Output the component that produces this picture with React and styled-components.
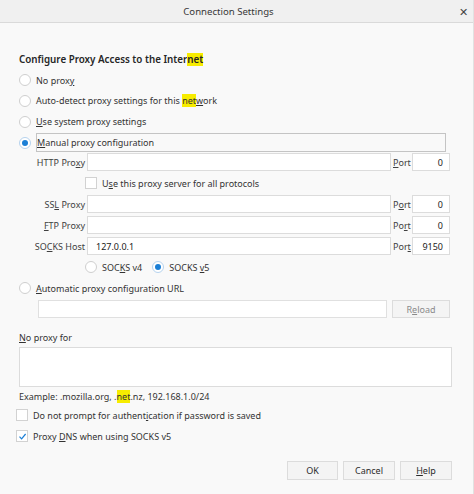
import React from "react";
import styled, { createGlobalStyle } from "styled-components";

const GlobalStyle = createGlobalStyle`
  html, body { margin: 0; padding: 0; background: #f9f9f9; }
  body { font-family: "Noto Sans", "Open Sans", sans-serif; font-size: 9px; color: #333; }
  * { box-sizing: border-box; }
`;

const Window = styled.div`
  width: 474px;
  height: 494px;
  background: #f9f9f9;
  display: flex;
  flex-direction: column;
  border-right: 1px solid #e2e2e2;
  overflow: hidden;
`;

const TitleBar = styled.div`
  height: 23px;
  flex: none;
  background: #f0f0f0;
  border-bottom: 1px solid #dadada;
  display: grid;
  grid-template-columns: 1fr auto 1fr;
  align-items: center;
`;

const Title = styled.div`
  grid-column: 2;
  font-size: 9.6px;
  color: #383838;
  padding-right: 16px;
`;

const Close = styled.div`
  grid-column: 3;
  justify-self: end;
  margin-right: 5px;
  font-size: 11px;
  color: #444;
`;

const Content = styled.div`
  display: flex;
  flex-direction: column;
  padding: 29px 21px 0 19px;
`;

const Heading = styled.div`
  height: 16px;
  line-height: 16px;
  font-size: 9.8px;
  font-weight: 600;
  color: #262626;
`;

const Mark = styled.span`
  background: #f7ec00;
`;

const Key = styled.span`
  text-decoration: underline;
  text-underline-offset: 1px;
`;

const OptionRow = styled.label`
  display: flex;
  align-items: center;
  gap: 5px;
  height: ${(p) => p.$h || 20}px;
  margin-top: ${(p) => p.$mt || 0}px;
  margin-left: ${(p) => p.$ml || 0}px;
`;

const RadioDot = styled.span`
  flex: none;
  width: 12px;
  height: 12px;
  border-radius: 50%;
  background: #fff;
  border: 1px solid ${(p) => (p.$on ? "#b6d3ee" : "#cfcfcf")};
  display: flex;
  align-items: center;
  justify-content: center;
  &::after {
    content: "";
    width: 6px;
    height: 6px;
    border-radius: 50%;
    background: ${(p) => (p.$on ? "#1b7fd6" : "transparent")};
  }
`;

const FocusText = styled.span`
  flex: 1;
  height: 19px;
  line-height: 17px;
  border: 1px solid #c4c4c4;
  margin-right: 6px;
`;

const ProxyGrid = styled.div`
  display: grid;
  grid-template-columns: 49px 304px 17px 38px;
  grid-template-rows: 18px 18px 18px 18px 18px 18px;
  column-gap: 2px;
  row-gap: 3px;
  margin-left: 17px;
  margin-top: 1px;
  align-items: center;
`;

const FieldLabel = styled.span`
  justify-self: end;
  white-space: nowrap;
  color: #404040;
`;

const PortLabel = styled.span`
  color: #404040;
`;

const TextField = styled.div`
  height: 18px;
  background: #fff;
  border: 1px solid #dcdcdc;
  display: flex;
  align-items: center;
  justify-content: ${(p) => (p.$right ? "flex-end" : "flex-start")};
  padding: 0 ${(p) => (p.$right ? 6 : 8)}px;
  color: #222;
`;

const SpanRow = styled.div`
  grid-column: 2 / 5;
  display: flex;
  align-items: center;
  gap: 5px;
  margin-left: -2px;
`;

const VersionRow = styled.div`
  grid-column: 2 / 5;
  display: flex;
  align-items: center;
  margin-left: -2px;
  gap: 10px;
`;

const Box = styled.span`
  flex: none;
  width: 12px;
  height: 12px;
  background: #fff;
  border: 1px solid #d2d2d2;
  display: flex;
  align-items: center;
  justify-content: center;
`;

const UrlRow = styled.div`
  display: flex;
  gap: 5px;
  height: 18px;
  margin-top: 3px;
  margin-left: 19px;
  margin-right: 2px;
`;

const UrlField = styled.div`
  flex: 1;
  background: #fff;
  border: 1px solid #e0e0e0;
`;

const Button = styled.div`
  width: ${(p) => p.$w || 52}px;
  height: ${(p) => p.$h || 19}px;
  border: 1px solid #dcdcdc;
  background: #f4f4f4;
  display: flex;
  align-items: center;
  justify-content: center;
  color: ${(p) => (p.$disabled ? "#8a8a8a" : "#2b2b2b")};
`;

const SectionLabel = styled.div`
  height: 16px;
  line-height: 16px;
  margin-top: 12px;
`;

const TextArea = styled.div`
  height: 40px;
  margin-top: 1px;
  background: #fff;
  border: 1px solid #dcdcdc;
`;

const Hint = styled.div`
  height: 16px;
  line-height: 16px;
  margin-top: 2px;
`;

const ButtonBar = styled.div`
  display: flex;
  justify-content: flex-end;
  gap: 5px;
  margin-top: 16px;
`;

const Check = ({ on }) => (
  <Box>
    {on && (
      <svg width="9" height="9" viewBox="0 0 9 9">
        <path d="M1.5 4.6 L3.6 6.8 L7.6 2" fill="none" stroke="#1b7fd6" strokeWidth="1.2" />
      </svg>
    )}
  </Box>
);

export default function App() {
  return (
    <>
      <GlobalStyle />
      <Window>
        <TitleBar>
          <Title>Connection Settings</Title>
          <Close>✕</Close>
        </TitleBar>
        <Content>
          <Heading>
            Configure Proxy Access to the Inter<Mark>net</Mark>
          </Heading>
          <OptionRow $mt={2}>
            <RadioDot />
            <span>No prox<Key>y</Key></span>
          </OptionRow>
          <OptionRow $h={21}>
            <RadioDot />
            <span>
              Auto-detect proxy settings for this <Mark>net</Mark><Key>w</Key>ork
            </span>
          </OptionRow>
          <OptionRow $h={21}>
            <RadioDot />
            <span><Key>U</Key>se system proxy settings</span>
          </OptionRow>
          <OptionRow $h={19} $mt={1}>
            <RadioDot $on />
            <FocusText><Key>M</Key>anual proxy configuration</FocusText>
          </OptionRow>

          <ProxyGrid>
            <FieldLabel>HTTP Pro<Key>x</Key>y</FieldLabel>
            <TextField />
            <PortLabel><Key>P</Key>ort</PortLabel>
            <TextField $right>0</TextField>

            <SpanRow>
              <Check />
              <span>U<Key>s</Key>e this proxy server for all protocols</span>
            </SpanRow>

            <FieldLabel>SS<Key>L</Key> Proxy</FieldLabel>
            <TextField />
            <PortLabel>P<Key>o</Key>rt</PortLabel>
            <TextField $right>0</TextField>

            <FieldLabel><Key>F</Key>TP Proxy</FieldLabel>
            <TextField />
            <PortLabel>Po<Key>r</Key>t</PortLabel>
            <TextField $right>0</TextField>

            <FieldLabel>SO<Key>C</Key>KS Host</FieldLabel>
            <TextField>127.0.0.1</TextField>
            <PortLabel>Por<Key>t</Key></PortLabel>
            <TextField $right>9150</TextField>

            <VersionRow>
              <OptionRow>
                <RadioDot />
                <span>SOC<Key>K</Key>S v4</span>
              </OptionRow>
              <OptionRow>
                <RadioDot $on />
                <span>SOCKS <Key>v</Key>5</span>
              </OptionRow>
            </VersionRow>
          </ProxyGrid>

          <OptionRow $h={18} $mt={3}>
            <RadioDot />
            <span><Key>A</Key>utomatic proxy configuration URL</span>
          </OptionRow>
          <UrlRow>
            <UrlField />
            <Button $w={58} $h={18} $disabled>R<Key>e</Key>load</Button>
          </UrlRow>

          <SectionLabel><Key>N</Key>o proxy for</SectionLabel>
          <TextArea />
          <Hint>
            Example: .mozilla.org, .<Mark>net</Mark>.nz, 192.168.1.0/24
          </Hint>
          <OptionRow $h={18} $mt={1} $ml={-3}>
            <Check />
            <span>Do not prompt for authent<Key>i</Key>cation if password is saved</span>
          </OptionRow>
          <OptionRow $h={18} $mt={3} $ml={-3}>
            <Check on />
            <span>Proxy <Key>D</Key>NS when using SOCKS v5</span>
          </OptionRow>

          <ButtonBar>
            <Button $w={51}>OK</Button>
            <Button>Cancel</Button>
            <Button><Key>H</Key>elp</Button>
          </ButtonBar>
        </Content>
      </Window>
    </>
  );
}
